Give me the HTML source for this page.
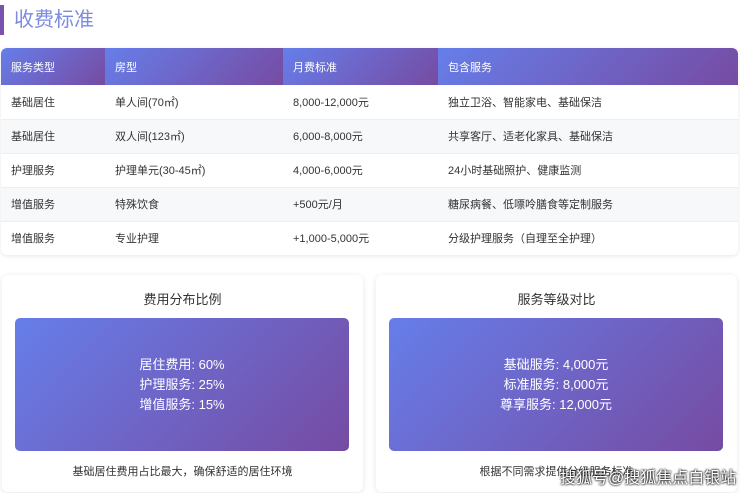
<!DOCTYPE html><html><head><meta charset="utf-8"><style>
*{margin:0;padding:0;box-sizing:border-box}
body{width:740px;height:493px;background:#fff;font-family:"Liberation Sans","Noto Sans CJK SC",sans-serif;position:relative;overflow:hidden;color:#333}
.t{position:absolute;left:0;top:5px;height:30px;border-left:4px solid #7a52b0;padding-left:10px;font-size:20px;line-height:30px;color:#7b8be0}
table{position:absolute;left:1px;top:48px;width:737px;border-collapse:collapse;font-size:11px;border-radius:6px;overflow:hidden;box-shadow:0 1px 5px rgba(0,0,0,.1)}
th{height:37px;text-align:left;font-weight:normal;color:#fff;padding-left:10px;background:linear-gradient(135deg,#667eea,#764ba2)}
td{height:34px;padding-left:10px;color:#333;border-bottom:1px solid #eee}
tr:nth-child(odd) td{background:#f7f8fa}
.c{position:absolute;top:275px;width:361px;height:217px;background:#fff;border-radius:6px;box-shadow:0 1px 6px rgba(0,0,0,.1)}
.c h3{position:absolute;top:14px;width:100%;text-align:center;font-weight:normal;font-size:13px;color:#333}
.b{position:absolute;left:13px;top:43px;width:334px;height:133px;border-radius:5px;background:linear-gradient(135deg,#667eea,#764ba2);color:#fff;font-size:13px;line-height:20px;text-align:center;padding-top:37px}
.c p{position:absolute;top:188px;width:100%;text-align:center;font-size:11px;color:#333}
.w{position:absolute;left:560px;top:464px;font-size:16px;color:#fff;text-shadow:0 0 2px #000,0 0 2px #000}
</style></head><body>
<div class="t">收费标准</div>
<table>
<tr><th style="width:104px">服务类型</th><th style="width:178px">房型</th><th style="width:155px">月费标准</th><th>包含服务</th></tr>
<tr><td>基础居住</td><td>单人间(70㎡)</td><td>8,000-12,000元</td><td>独立卫浴、智能家电、基础保洁</td></tr>
<tr><td>基础居住</td><td>双人间(123㎡)</td><td>6,000-8,000元</td><td>共享客厅、适老化家具、基础保洁</td></tr>
<tr><td>护理服务</td><td>护理单元(30-45㎡)</td><td>4,000-6,000元</td><td>24小时基础照护、健康监测</td></tr>
<tr><td>增值服务</td><td>特殊饮食</td><td>+500元/月</td><td>糖尿病餐、低嘌呤膳食等定制服务</td></tr>
<tr><td style="border:0">增值服务</td><td style="border:0">专业护理</td><td style="border:0">+1,000-5,000元</td><td style="border:0">分级护理服务（自理至全护理）</td></tr>
</table>
<div class="c" style="left:2px"><h3>费用分布比例</h3><div class="b">居住费用: 60%<br>护理服务: 25%<br>增值服务: 15%</div><p>基础居住费用占比最大，确保舒适的居住环境</p></div>
<div class="c" style="left:376px"><h3>服务等级对比</h3><div class="b">基础服务: 4,000元<br>标准服务: 8,000元<br>尊享服务: 12,000元</div><p>根据不同需求提供分级服务标准</p></div>
<div class="w">搜狐号@搜狐焦点白银站</div>
</body></html>
